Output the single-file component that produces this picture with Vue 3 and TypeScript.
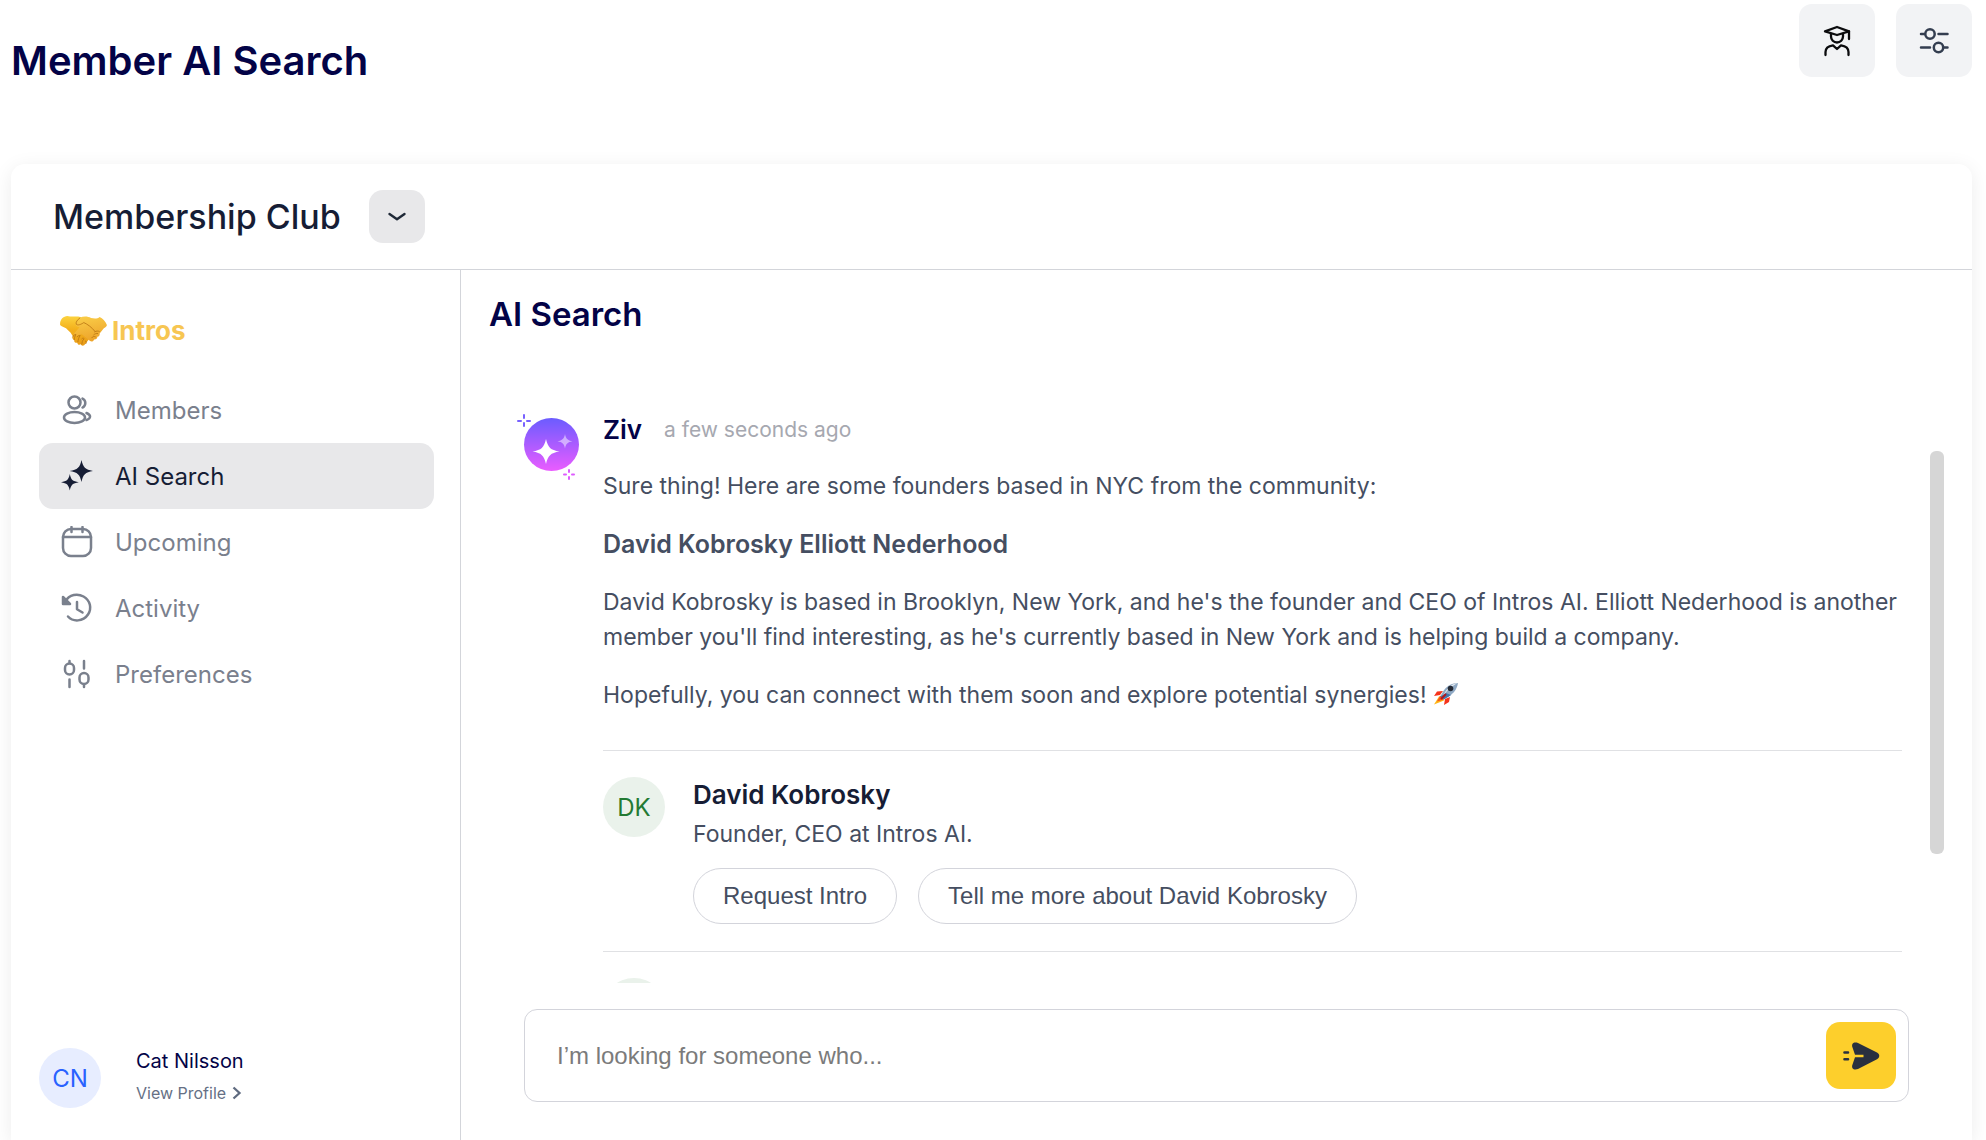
<script setup lang="ts">
import { ref } from 'vue'

interface NavItem {
  id: string
  label: string
}

const navItems: NavItem[] = [
  { id: 'members', label: 'Members' },
  { id: 'search', label: 'AI Search' },
  { id: 'upcoming', label: 'Upcoming' },
  { id: 'activity', label: 'Activity' },
  { id: 'preferences', label: 'Preferences' },
]

const active = ref('search')
const query = ref('')
</script>

<template>
  <div class="page">
    <header class="page-header">
      <h1>Member AI Search</h1>
      <div class="header-actions">
        <button type="button" class="square-button" aria-label="Student profile">
          <svg width="32" height="32" viewBox="0 0 32 32" fill="none" stroke="#0b0b0d" stroke-width="2.3" stroke-linecap="round" stroke-linejoin="round">
            <path d="M4 6.4 16 2l12 4.400-12 3.600z" />
            <path d="M28 6.400V14" />
            <path d="M10 8.800V11.500a6 6 0 0 0 12 0V8.800" />
            <path d="M4.500 30v-3c0-3.600 2.700-6 7.500-6.700L16 24l4-3.700c4.800.7 7.500 3.100 7.500 6.700v3" />
          </svg>
        </button>
        <button type="button" class="square-button" aria-label="Filters">
          <svg width="32" height="32" viewBox="0 0 32 32" fill="none" stroke="#343e50" stroke-width="2.500" stroke-linecap="round">
            <circle cx="12" cy="9" r="4.700" /><path d="M3 9h3.500M20.500 9h9" />
            <circle cx="20.500" cy="22.500" r="4.700" /><path d="M3 22.500h9M26 22.500h3.500" />
          </svg>
        </button>
      </div>
    </header>

    <section class="card">
      <div class="club-bar">
        <h2>Membership Club</h2>
        <button type="button" class="club-toggle" aria-label="Switch club">
          <svg width="20" height="12" viewBox="0 0 20 12" fill="none" stroke="#1f2937" stroke-width="2.400" stroke-linecap="round" stroke-linejoin="round">
            <path d="m2.500 3 7.500 5.200L17.500 3" />
          </svg>
        </button>
      </div>

      <div class="card-body">
        <aside class="sidebar">
          <a class="logo" href="#intros">
            <svg width="47" height="31" viewBox="0 0 142 94" aria-hidden="true">
              <defs>
                <linearGradient id="hand-left" x1="0" y1="0" x2="0" y2="1">
                  <stop offset="0" stop-color="#fcd33f" /><stop offset=".45" stop-color="#f3b01c" /><stop offset="1" stop-color="#e99c19" />
                </linearGradient>
                <linearGradient id="hand-right" x1="0" y1="0" x2=".3" y2="1">
                  <stop offset="0" stop-color="#fbd04a" /><stop offset="1" stop-color="#eda52c" />
                </linearGradient>
              </defs>
              <path fill="url(#hand-left)" d="M0 24C2 12 10 4 22 3c14 4 27 0 39 3l40 22-12 44-16 20c-5 3-9 1-10-3-6 3-10 0-11-5-6 1-10-2-9-8-5-1-7-6-4-11L32 54 18 40C12 36 4 35 0 30z" />
              <path fill="url(#hand-right)" d="M60 8c10-5 24-5 34 1 9 2 19 3 26-3 9 4 17 13 22 24 0 5-6 7-10 11l-12 15c1 6-2 9-7 10 0 6-5 9-10 8-2 6-7 8-12 5L66 58 50 63c-7 1-10-6-5-10l14-16c-6-1-14-5-11-12 1-6 5-13 12-17z" />
              <path fill="none" stroke="#b87512" stroke-width="2.500" stroke-linecap="round" d="M60 9C52 15 47 22 49 28c5 5 15 0 23-5 11 5 24 14 34 27M38 67c3-7 7-8 10-8-4 7-5 12-5 16M52 66c3-4 6-4 9-4-5 7-6 13-7 19M66 72c3-3 5-2 7 0-6 5-6 11-7 16M77 79c3 0 4 3 1 8M102 60c3-3 8-5 12-4M96 69c3-4 7-5 11-3M105 51c5-3 10-3 14-1" />
            </svg>
            <span>Intros</span>
          </a>

          <nav aria-label="Main">
            <a
              v-for="item in navItems"
              :key="item.id"
              :href="'#' + item.id"
              class="nav-item"
              :class="{ active: active === item.id }"
              :aria-current="active === item.id ? 'page' : undefined"
              @click="active = item.id"
            >
              <svg v-if="item.id === 'members'" class="nav-icon" viewBox="0 0 32 32">
                <circle cx="13.500" cy="8.500" r="6" /><ellipse cx="13.500" cy="23.500" rx="10.500" ry="5.500" />
                <path d="M21.500 4.500a5 5 0 0 1 0 9M25.500 19c5 2.200 4.500 5.500 0 7" />
              </svg>
              <svg v-else-if="item.id === 'search'" class="nav-icon solid" viewBox="0 0 32 32">
                <path d="M20.500 0c1.600 7.500 3.800 9.700 12 11-8.200 1.300-10.400 3.500-12 11-1.600-7.500-3.800-9.700-12-11 8.200-1.300 10.400-3.500 12-11zM8.800 14c1.200 5.800 2.800 7.300 9 8.200-6.200 1-7.800 2.500-9 8.300-1.200-5.800-2.800-7.300-9-8.300 6.200-.9 7.800-2.400 9-8.200z" />
              </svg>
              <svg v-else-if="item.id === 'upcoming'" class="nav-icon" viewBox="0 0 32 32">
                <rect x="2" y="3" width="28" height="27" rx="8" /><path d="M2 11h28M10.500 1v5M21.500 1v5" />
              </svg>
              <svg v-else-if="item.id === 'activity'" class="nav-icon" viewBox="0 0 32 32">
                <path d="M4.500 9.500C8 2 17 1.500 22.500 4.500c7 4 8.500 12 4.500 18C22 30 12 30 7 24.500" />
                <path class="arrow" d="M2 5v7h7z" /><path d="M16 10v7.200l5.500 3.300" />
              </svg>
              <svg v-else class="nav-icon" viewBox="0 0 32 32">
                <rect x="4" y="5.500" width="9" height="11" rx="4.500" /><path d="M8.500 3v2M8.500 21.500V29" />
                <rect x="18.500" y="15" width="9" height="11" rx="4.500" /><path d="M23 3v7.500M23 27v2" />
              </svg>
              <span>{{ item.label }}</span>
            </a>
          </nav>

          <div class="user">
            <span class="avatar blue">CN</span>
            <div class="user-info">
              <span class="user-name">Cat Nilsson</span>
              <a href="#profile" class="user-link">
                View Profile
                <svg width="10" height="14" viewBox="0 0 10 14" fill="none" stroke="#5f6b80" stroke-width="2.300"><path d="m1.500 1.500 6 5.500-6 5.500" /></svg>
              </a>
            </div>
          </div>
        </aside>

        <main class="main">
          <h2 class="main-title">AI Search</h2>

          <div class="chat">
            <div class="log">
              <article class="message">
                <svg class="bot" width="62" height="70" viewBox="0 0 62 70" role="img" aria-label="Ziv">
                  <defs>
                    <linearGradient id="bot-fill" x1="0" y1="0" x2="0" y2="1">
                      <stop offset="0" stop-color="#6b5cff" /><stop offset="1" stop-color="#ea5cff" />
                    </linearGradient>
                  </defs>
                  <ellipse cx="34.500" cy="33.500" rx="27.500" ry="26.500" fill="url(#bot-fill)" />
                  <path fill="#fff" d="M29 28c2 8.500 4.500 11 13.500 12.500C33.500 42 31 44.500 29 53c-2-8.500-4.500-11-13.500-12.500C24.500 39 27 36.500 29 28z" />
                  <path fill="#fff" opacity=".5" d="M48 23c1 4.800 2.500 6.300 7.500 7.300-5 1-6.500 2.400-7.500 7.200-1-4.800-2.500-6.200-7.500-7.200 5-1 6.500-2.500 7.500-7.300z" />
                  <path stroke="#7861ff" stroke-width="2" stroke-linecap="round" d="M7 4v3M7 12v3M1 10h3M10 10h3" />
                  <path stroke="#de5cff" stroke-width="2" stroke-linecap="round" d="M52 59v2M52 66v2M47 63.500h2M55 63.500h2" />
                </svg>
                <div class="message-body">
                  <div class="message-head">
                    <strong>Ziv</strong>
                    <time>a few seconds ago</time>
                  </div>
                  <p>Sure thing! Here are some founders based in NYC from the community:</p>
                  <p class="names">David Kobrosky Elliott Nederhood</p>
                  <p>David Kobrosky is based in Brooklyn, New York, and he's the founder and CEO of Intros AI. Elliott Nederhood is another member you'll find interesting, as he's currently based in New York and is helping build a company.</p>
                  <p>
                    Hopefully, you can connect with them soon and explore potential synergies!
                    <svg class="rocket" width="26" height="24" viewBox="0 0 26 24" role="img" aria-label="rocket">
                      <path fill="#f5331b" d="M10 9 4 9.500 1 14l6-1zM17 15l-1 5-5 3 1-6z" />
                      <path fill="#ffb515" d="M6 14.500 1 22.500l10-4-2-4z" />
                      <path fill="#f5541c" d="m7 14-3 5.500 7-2-2-4z" />
                      <path fill="#8fa9c4" d="M25 1c-7-.2-11.500 3.500-15 8.500L7.500 14l3.500 3 5-2.500c4.500-3.500 8-7 9-13.500z" />
                      <path fill="#4275ac" d="m13 11-5.500 3.500 3.500 3 7-4.500z" />
                      <path fill="#e8edf2" d="M25 1c-3 1-8 5-11 8l-4 5C14 6 18 2 25 1z" />
                      <circle cx="17.500" cy="6.500" r="2.800" fill="#262b35" /><path stroke="#b3161b" stroke-width="2" d="m8 17 5-5" />
                    </svg>
                  </p>

                  <div class="people">
                    <div class="person">
                      <span class="avatar green">DK</span>
                      <div class="person-info">
                        <h3>David Kobrosky</h3>
                        <span class="role">Founder, CEO at Intros AI.</span>
                        <div class="chips">
                          <button type="button" class="chip">Request Intro</button>
                          <button type="button" class="chip">Tell me more about David Kobrosky</button>
                        </div>
                      </div>
                    </div>
                    <div class="person">
                      <span class="avatar green"></span>
                    </div>
                  </div>
                </div>
              </article>
            </div>
            <div class="scroll-track" aria-hidden="true"><div class="scroll-thumb"></div></div>
          </div>

          <form class="composer" @submit.prevent>
            <input v-model="query" type="text" placeholder="I’m looking for someone who..." aria-label="Describe who you are looking for" />
            <button type="submit" class="send" aria-label="Send">
              <svg width="38" height="30" viewBox="0 0 38 30" fill="#29303f">
                <path d="M10.500 6.500C9 2.500 12 .5 16 2l19 9.500c3 1.700 3 5 0 6.700L16 28c-4 1.500-7-.5-5.500-4.500L13 16.200h8.500v-2.400H13z" />
                <path stroke="#29303f" stroke-width="2.600" stroke-linecap="round" d="M2.500 11.500H6M2.500 18.300H6" />
              </svg>
            </button>
          </form>
        </main>
      </div>
    </section>
  </div>
</template>

<style>
body {
  margin: 0;
  background: #fff;
}
</style>

<style scoped>
.page {
  display: flex;
  flex-direction: column;
  box-sizing: border-box;
  height: 100vh;
  padding: 0 14px 0 11px;
  overflow: hidden;
  font-family: Inter, "Liberation Sans", sans-serif;
  color: #454e61;
}
h1, h2, h3, p {
  margin: 0;
}
button {
  padding: 0;
  border: 0;
  cursor: pointer;
}
a {
  text-decoration: none;
}
svg {
  flex: none;
}
.page-header {
  display: flex;
  justify-content: space-between;
  align-items: flex-start;
  height: 164px;
  flex: none;
}
h1 {
  padding-top: 37px;
  font-size: 40px;
  line-height: 48px;
  font-weight: 600;
  color: #030347;
}
.header-actions {
  display: flex;
  gap: 21px;
  padding-top: 4px;
}
.square-button {
  display: grid;
  place-items: center;
  width: 76px;
  height: 73px;
  border-radius: 13px;
  background: #f2f3f5;
}
.card {
  display: flex;
  flex-direction: column;
  flex: 1;
  min-height: 0;
  border-radius: 14px 14px 0 0;
  background: #fff;
  box-shadow: 0 4px 20px rgba(0, 0, 0, 0.08);
}
.club-bar {
  display: flex;
  align-items: center;
  gap: 28px;
  box-sizing: border-box;
  height: 106px;
  padding: 0 42px;
  flex: none;
  border-bottom: 1px solid #d3d5da;
}
.club-bar h2 {
  font-size: 34px;
  line-height: 40px;
  font-weight: 500;
  color: #161d35;
}
.club-toggle {
  display: grid;
  place-items: center;
  width: 56px;
  height: 53px;
  border-radius: 14px;
  background: #e8e8ea;
}
.card-body {
  display: flex;
  flex: 1;
  min-height: 0;
}
.sidebar {
  display: flex;
  flex-direction: column;
  box-sizing: border-box;
  width: 450px;
  padding: 40px 26px 31px 28px;
  flex: none;
  border-right: 1px solid #d3d5da;
}
.logo {
  display: flex;
  align-items: center;
  gap: 5px;
  height: 40px;
  margin-bottom: 27px;
  padding-left: 21px;
  font-size: 26px;
  font-weight: 700;
  color: #f7c652;
}
.nav-item {
  display: flex;
  align-items: center;
  gap: 22px;
  height: 66px;
  padding-left: 22px;
  border-radius: 14px;
  font-size: 24px;
  color: #7a808d;
}
.nav-item.active {
  background: #e8e8ea;
  color: #161d35;
}
.nav-icon {
  width: 32px;
  height: 32px;
  fill: none;
  stroke: #7a808d;
  stroke-width: 2.5;
  stroke-linecap: round;
  stroke-linejoin: round;
}
.nav-icon.solid {
  fill: #161d35;
  stroke: none;
}
.nav-icon .arrow {
  fill: #7a808d;
}
.avatar {
  display: grid;
  place-items: center;
  width: 62px;
  height: 60px;
  flex: none;
  border-radius: 50%;
  font-size: 24px;
}
.blue {
  background: #e7edff;
  color: #2962ff;
}
.green {
  background: #eaf2eb;
  color: #237a33;
}
.user {
  display: flex;
  align-items: center;
  gap: 35px;
  margin-top: auto;
}
.user-info {
  display: flex;
  flex-direction: column;
  gap: 6px;
  padding-bottom: 4px;
}
.user-name {
  font-size: 20px;
  line-height: 28px;
  color: #030347;
}
.user-link {
  display: flex;
  align-items: center;
  gap: 6px;
  font-size: 16px;
  line-height: 24px;
  color: #667085;
}
.main {
  display: flex;
  flex-direction: column;
  flex: 1;
  min-width: 0;
}
.main-title {
  padding: 24px 28px;
  font-size: 33px;
  line-height: 40px;
  font-weight: 600;
  color: #030347;
}
.chat {
  display: flex;
  flex: 1;
  gap: 28px;
  min-height: 0;
  padding: 48px 28px 0 56px;
}
.log {
  flex: 1;
  min-width: 0;
  overflow: hidden;
}
.message {
  display: flex;
  gap: 24px;
}
.bot {
  margin-top: 5px;
}
.message-body {
  flex: 1;
  min-width: 0;
}
.message-head {
  display: flex;
  align-items: center;
  gap: 22px;
  height: 46px;
}
.message-head strong {
  font-size: 26px;
  font-weight: 600;
  color: #030347;
}
.message-head time {
  font-size: 21px;
  color: #a6a8b0;
}
p {
  margin-bottom: 23px;
  font-size: 23px;
  line-height: 35px;
}
.message-head + p {
  margin-top: 17px;
}
.names {
  font-size: 25px;
  font-weight: 600;
}
.rocket {
  vertical-align: -3px;
}
.people {
  display: flex;
  flex-direction: column;
  gap: 27px;
  margin-top: 37px;
}
.person {
  display: flex;
  gap: 28px;
  padding-top: 26px;
  border-top: 1px solid #e0e1e4;
}
.person-info {
  flex: 1;
}
h3 {
  font-size: 26px;
  line-height: 36px;
  font-weight: 600;
  color: #161d35;
}
.role {
  display: block;
  margin: 3px 0 16px;
  font-size: 23px;
  line-height: 36px;
}
.chips {
  display: flex;
  gap: 21px;
}
.chip {
  height: 56px;
  padding: 0 29px;
  border: 1px solid #d3d4db;
  border-radius: 28px;
  background: #fff;
  font-family: "Liberation Sans", sans-serif;
  font-size: 24px;
  color: #454e61;
}
.scroll-track {
  width: 14px;
  padding-top: 45px;
}
.scroll-thumb {
  height: 403px;
  border-radius: 6px;
  background: #d6d6d6;
}
.composer {
  display: flex;
  align-items: center;
  box-sizing: border-box;
  height: 93px;
  margin: 26px 63px 38px;
  padding: 0 12px 0 32px;
  flex: none;
  border: 1px solid #d3d4db;
  border-radius: 13px;
}
.composer input {
  flex: 1;
  min-width: 0;
  padding: 0;
  border: 0;
  outline: 0;
  background: none;
  font-family: "Liberation Sans", sans-serif;
  font-size: 24px;
}
.composer input::placeholder {
  color: #7b7b7b;
}
.send {
  display: grid;
  place-items: center;
  width: 70px;
  height: 67px;
  border-radius: 14px;
  background: #fdcf2c;
}
</style>
